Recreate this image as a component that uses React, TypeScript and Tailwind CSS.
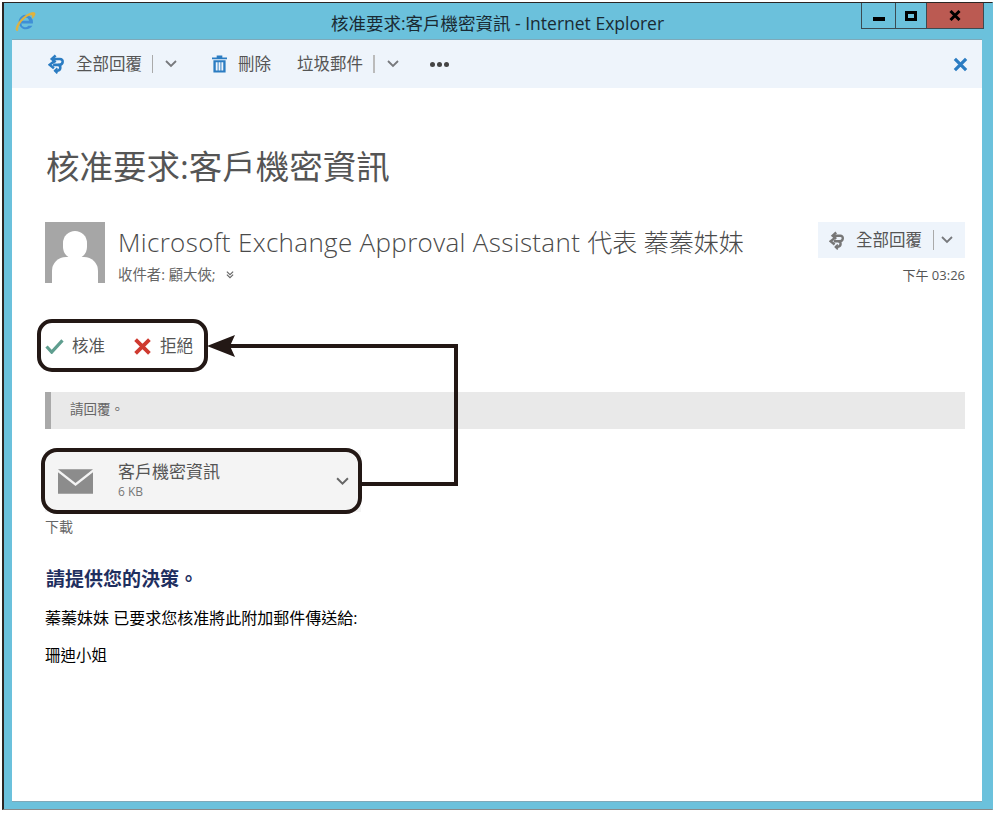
import React from 'react';

const CJK = 'font-["Open_Sans","Noto_Sans_CJK_TC",sans-serif]';

function ReplyAllIcon({ color, className }: { color: string; className?: string }) {
  return (
    <svg viewBox="0 0 20 22" className={className} fill="none">
      <path d="M9 1 L4.5 5 L9 9" stroke={color} strokeWidth="3" />
      <path d="M5 5 H14 C18.5 5 18.5 12 13 12 H6" stroke={color} strokeWidth="3" />
      <path d="M7 8 L2 12 L7 16" stroke={color} strokeWidth="3" />
      <path d="M12 12 C15.5 13 15.5 18 11 19 L8 19" stroke={color} strokeWidth="3" />
      <path d="M11 16 L8 19 L11 22" stroke={color} strokeWidth="2.2" />
    </svg>
  );
}

function Chevron({ className, color = '#77797c' }: { className?: string; color?: string }) {
  return (
    <svg viewBox="0 0 12 8" className={className} fill="none">
      <path d="M1 1 L6 6 L11 1" stroke={color} strokeWidth="1.8" />
    </svg>
  );
}

function IeLogo() {
  return (
    <svg viewBox="0 0 24 24" className="w-[22px] h-[22px]" fill="none">
      <path d="M12.5 4 A8 8 0 1 0 20 16 H15.6 A4.2 4.2 0 0 1 8 13.5 H20.6 A8.4 8.4 0 0 0 12.5 4 Z M8.2 10.5 A4.2 4.2 0 0 1 16.4 10.5 Z" fill="#3f8fd6" fillRule="evenodd" />
      <path d="M4 21.5 C0 22 3 13 10 7 C16 2 23 0 23 3 C23 5 21 7 20 8 C20.5 5 20 3.5 17 4.5 C11 6.5 3 16 4 21.5 Z" fill="#e3b23c" stroke="#e3b23c" strokeWidth="0.8" />
    </svg>
  );
}

export default function App() {
  return (
    <div className={`relative w-[996px] h-[814px] bg-white pt-[2px] pl-[2px] pr-[3px] pb-[4px] ${CJK}`}>
      <div className="flex flex-col h-full bg-[#6bc1dc] border-l-2 border-t border-b border-r border-[#2b2523] border-b-[#8a8a8a] border-r-[#6bc1dc]">
        {/* title bar */}
        <div className="flex items-start h-[36px] shrink-0 relative">
          <div className="pl-[10px] pt-[8px]">
            <IeLogo />
          </div>
          <div className="flex-1 text-center pt-[8px] pl-[98px] leading-[24px] text-[#1a2a33] text-[17.5px]">
            核准要求:客戶機密資訊 - Internet Explorer
          </div>
          <div className="flex h-[26px] mr-[8px] border-b border-l border-r border-[#3b4b52]">
            <div className="w-[34px] flex items-center justify-center border-r border-[#3b4b52]">
              <div className="w-[12px] h-[4px] bg-black mt-[6px]" />
            </div>
            <div className="w-[31px] flex items-center justify-center border-r border-[#3b4b52]">
              <div className="w-[12px] h-[10px] border-[3px] border-black" />
            </div>
            <div className="w-[56px] flex items-center justify-center bg-[#bb5a52]">
              <svg viewBox="0 0 12 11" className="w-[12px] h-[11px]">
                <path d="M1.5 1 L10.5 10 M10.5 1 L1.5 10" stroke="#000" strokeWidth="3" />
              </svg>
            </div>
          </div>
        </div>

        {/* client area */}
        <div className="flex flex-col flex-1 ml-[8px] mr-[10px] mb-[7px] bg-white border-t border-b border-[#7ea9b9]">
          <div className="flex items-center h-[48px] bg-[#eef4fb] pl-[36px] pr-[14px] text-[16.5px] text-[#555]">
            <ReplyAllIcon color="#2b7cc2" className="w-[17px] h-[20px] mr-[11px]" />
            <span>全部回覆</span>
            <div className="w-[1px] h-[18px] bg-[#aaa] ml-[10px] mr-[12px]" />
            <Chevron className="w-[12px] h-[8px]" />
            <svg viewBox="0 0 16 18" className="w-[15px] h-[18px] ml-[35px] mr-[11px]">
              <path d="M0 2 H16 V4 H0 Z M5 0 H11 V2 H5 Z" fill="#2b7cc2" />
              <path d="M1.5 5 H14.5 V18 H1.5 Z M4 7 V16 H6 V7 Z M7 7 V16 H9 V7 Z M10 7 V16 H12 V7 Z" fill="#2b7cc2" fillRule="evenodd" />
            </svg>
            <span>刪除</span>
            <span className="ml-[26px]">垃圾郵件</span>
            <div className="w-[2px] h-[18px] bg-[#bbb] ml-[10px] mr-[12px]" />
            <Chevron className="w-[12px] h-[8px]" />
            <div className="flex gap-[2px] ml-[31px]">
              <div className="w-[5px] h-[5px] rounded-full bg-[#444]" />
              <div className="w-[5px] h-[5px] rounded-full bg-[#444]" />
              <div className="w-[5px] h-[5px] rounded-full bg-[#444]" />
            </div>
            <svg viewBox="0 0 16 16" className="w-[15px] h-[15px] ml-auto">
              <path d="M2 2 L14 14 M14 2 L2 14" stroke="#2b7cc2" strokeWidth="3.4" />
            </svg>
          </div>

          <div className="flex flex-col pl-[33px] pr-[17px]">
            <h1 className="mt-[56px] ml-[1px] text-[33.5px] leading-[44px] text-[#555] font-normal">核准要求:客戶機密資訊</h1>

            <div className="flex mt-[34px]">
              <div className="relative w-[60px] h-[61px] bg-[#a6a6a6] overflow-hidden shrink-0">
                <div className="absolute left-[18px] top-[9px] w-[24px] h-[28px] rounded-full bg-white" />
                <div className="absolute left-[7px] top-[35px] w-[46px] h-[30px] rounded-t-[14px] bg-white" />
              </div>
              <div className="flex-1 pl-[13px]">
                <div className="text-[26px] leading-[40px] font-light text-[#4a4a4a] tracking-[0.33px]">
                  Microsoft Exchange Approval Assistant <span className="text-[25px] tracking-normal">代表 蓁蓁妹妹</span>
                </div>
                <div className="flex items-center text-[14.4px] leading-[20px] text-[#666] mt-[3px]">
                  <span>收件者: 顧大俠;</span>
                  <span className="flex flex-col ml-[10px]">
                    <Chevron className="w-[8px] h-[5px]" color="#666" />
                    <Chevron className="w-[8px] h-[5px] -mt-[2px]" color="#666" />
                  </span>
                </div>
              </div>
              <div className="flex flex-col items-end">
                <div className="flex items-center h-[36px] w-[147px] bg-[#eef4fb] pl-[11px] text-[16.5px] text-[#555]">
                  <ReplyAllIcon color="#777" className="w-[16px] h-[19px] mr-[11px]" />
                  <span>全部回覆</span>
                  <div className="w-[1px] h-[20px] bg-[#aaa] ml-[11px] mr-[7px]" />
                  <Chevron className="w-[12px] h-[8px]" />
                </div>
                <div className="text-[13px] leading-[18px] mt-[8px] text-[#555]">下午 03:26</div>
              </div>
            </div>

            <div className="flex items-center h-[30px] mt-[46px] text-[16.5px] text-[#555]">
              <svg viewBox="0 0 20 16" className="w-[19px] h-[15px] mr-[8px]" fill="none">
                <path d="M1.5 8 L7 14 L18.5 1.5" stroke="#5f9e8f" strokeWidth="3.4" />
              </svg>
              <span>核准</span>
              <svg viewBox="0 0 16 16" className="w-[17px] h-[17px] ml-[29px] mr-[9px]" fill="none">
                <path d="M1.5 1.5 L14.5 14.5 M14.5 1.5 L1.5 14.5" stroke="#cf3a30" strokeWidth="3.6" />
              </svg>
              <span>拒絕</span>
            </div>

            <div className="flex items-center h-[37px] mt-[31px] pb-[3px] bg-[#e9e9e9] border-l-[6px] border-[#a9a9a9] pl-[19px] text-[13.5px] text-[#666]">
              請回覆。
            </div>

            <div className="flex items-center w-[316px] h-[62px] mt-[21px] bg-[#f4f4f4] pl-[13px] pr-[12px]">
              <svg viewBox="0 0 36 25" className="w-[35px] h-[25px] mr-[25px] shrink-0">
                <path d="M0 0 H36 L18 14 Z" fill="#8c8c8c" />
                <path d="M0 3 L18 17 L36 3 V25 H0 Z" fill="#8c8c8c" />
              </svg>
              <div className="flex-1">
                <div className="text-[17px] leading-[22px] text-[#555]">客戶機密資訊</div>
                <div className="text-[12px] leading-[18px] text-[#777]">6 KB</div>
              </div>
              <Chevron className="w-[13px] h-[9px]" color="#666" />
            </div>

            <div className="text-[14px] leading-[18px] mt-[6px] text-[#666]">下載</div>

            <div className="mt-[30px] ml-[1px] text-[19px] leading-[26px] font-bold text-[#1f2f5f]">請提供您的決策。</div>
            <div className="mt-[16px] text-[16px] leading-[20px] text-black">蓁蓁妹妹 已要求您核准將此附加郵件傳送給:</div>
            <div className="mt-[17px] text-[15.5px] leading-[20px] text-black">珊迪小姐</div>
          </div>
        </div>
      </div>

      {/* callout annotation */}
      <div className="absolute left-[37px] top-[319px] w-[171px] h-[53px] rounded-[15px] border-4 border-[#231815]" />
      <div className="absolute left-[41px] top-[448px] w-[321px] h-[66px] rounded-[16px] border-4 border-[#231815]" />
      <svg viewBox="0 0 260 160" className="absolute left-[205px] top-[330px] w-[260px] h-[160px]" fill="none">
        <path d="M155 154 H251 V16 H25" stroke="#231815" strokeWidth="4" />
        <path d="M2 16 L30 5 L25 16 L30 27 Z" fill="#231815" />
      </svg>
    </div>
  );
}
